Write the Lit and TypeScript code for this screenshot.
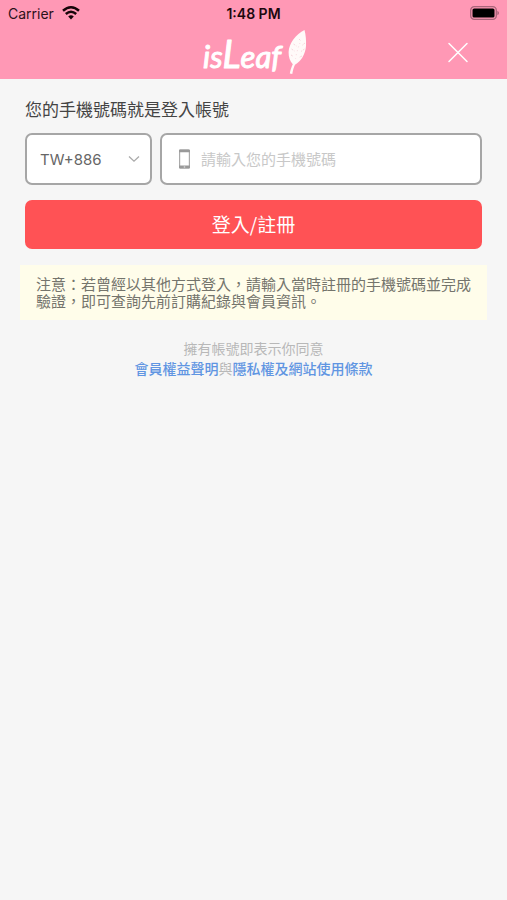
import { LitElement, html, css } from "lit";
import { customElement, state } from "lit/decorators.js";

const cjk = css`"Noto Sans CJK TC", sans-serif`;

@customElement("status-bar")
class StatusBar extends LitElement {
  static styles = css`
    :host {
      display: grid;
      grid-template-columns: 1fr auto 1fr;
      align-items: center;
      height: 26px;
      padding: 0 8px;
      font: 14px Inter, sans-serif;
      color: #2c1119;
    }
    .network {
      display: flex;
      align-items: center;
      gap: 8px;
    }
    .clock {
      font-weight: 600;
      color: #1c080e;
    }
    .battery {
      justify-self: end;
    }
    svg {
      display: block;
    }
  `;

  render() {
    return html`
      <div class="network">
        <span>Carrier</span>
        <svg width="18" height="14" viewBox="0 0 18 14" fill="none" stroke="#170509" aria-label="Wi-Fi">
          <path d="M1 4.8Q9-2.2 17 4.8" stroke-width="2.5" />
          <path d="M3.8 8Q9 3.3 14.2 8" stroke-width="2.4" />
          <path d="M6.2 10.6Q9 8 11.8 10.6L9 13.6Z" fill="#170509" stroke="none" />
        </svg>
      </div>
      <span class="clock">1:48 PM</span>
      <svg class="battery" width="30" height="14" viewBox="0 0 30 14" aria-label="Battery">
        <rect x="1.7" y="0.7" width="25.6" height="12.6" rx="3.6" fill="none" stroke="#a9647a" stroke-width="1.3" />
        <rect x="3.5" y="2.5" width="22" height="9" rx="1.6" fill="#000" />
        <path d="M28.4 4.8Q30 5.6 30 7T28.4 9.2Z" fill="#a9647a" />
      </svg>
    `;
  }
}

@customElement("brand-header")
class BrandHeader extends LitElement {
  static styles = css`
    :host {
      display: grid;
      grid-template-columns: 1fr auto 1fr;
      align-items: center;
      height: 53px;
      padding: 0 38px;
    }
    .logo {
      grid-column: 2;
      display: block;
      font: italic 400 31px Lato, sans-serif;
    }
    .capital {
      font-size: 38px;
    }
    .close {
      justify-self: end;
      display: flex;
      padding: 0;
      border: 0;
      background: none;
      cursor: pointer;
    }
  `;

  render() {
    return html`
      <svg class="logo" width="106" height="53" viewBox="0 0 106 53" role="img" aria-label="isLeaf">
        <text x="2" y="42" fill="#fff" stroke="#fff" stroke-width="1" stroke-linejoin="round">is<tspan class="capital">L</tspan>eaf</text>
        <path
          d="M103.5 4C95 8.500 88 17 87.600 26C87.500 31 89 35.500 91.800 38.200C90.500 41 89.500 43.500 88.800 47.500L91.300 48C91.800 44.500 92.800 41.500 94 38.800C100 35.500 104.500 28 105 20C105.300 14 104.800 9 103.500 4Z"
          fill="#fffaf9"
        />
        <g stroke="#f5ccd4" stroke-width="0.8" fill="none">
          <path d="M92.500 18l3 2M90.500 23l3 2M90 29l2.500 1.500M104 17l-3 2.500M103.500 23l-3.500 2.500M101 30l-3 1.500M98 13l2 2" stroke-dasharray="2 1" />
          <path d="M99 17Q96 24 94.500 33" stroke-dasharray="1 3" />
        </g>
      </svg>
      <button class="close" type="button" aria-label="關閉">
        <svg width="22" height="22" viewBox="0 0 22 22" stroke="#fff" stroke-width="1.5" stroke-linecap="round">
          <path d="M2 1.500L20 19.500M20 1.500L2 19.500" />
        </svg>
      </button>
    `;
  }
}

@customElement("login-form")
class LoginForm extends LitElement {
  static styles = css`
    :host {
      display: block;
      font-family: ${cjk};
    }
    .title {
      display: block;
      margin-bottom: 12px;
      font-size: 17px;
      line-height: 24px;
      color: #444;
    }
    .fields {
      display: grid;
      grid-template-columns: 127px 1fr;
      gap: 8px;
    }
    .field {
      display: flex;
      align-items: center;
      box-sizing: border-box;
      height: 52px;
      border: 2px solid #a6a6a6;
      border-radius: 7px;
      background: #fff;
    }
    .country {
      display: grid;
    }
    .country > * {
      grid-area: 1 / 1;
      align-self: center;
    }
    .code {
      appearance: none;
      width: 100%;
      height: 100%;
      padding: 0 13px;
      border: 0;
      background: none;
      font: 15px Inter, sans-serif;
      color: #666;
    }
    .chevron {
      justify-self: end;
      margin-right: 10px;
      pointer-events: none;
    }
    .phone {
      gap: 10px;
      padding: 0 16px;
    }
    .number {
      flex: 1;
      min-width: 0;
      height: 100%;
      padding: 0 0 2px;
      box-sizing: border-box;
      border: 0;
      outline: 0;
      background: none;
      font: 15px ${cjk};
      color: #444;
    }
    .number::placeholder {
      color: #c8c8c8;
    }
    .submit {
      width: 100%;
      height: 49px;
      margin-top: 15px;
      padding: 0 0 2px;
      border: 0;
      border-radius: 7px;
      background: #ff5255;
      font: 19px ${cjk};
      color: #fff;
      cursor: pointer;
    }
  `;

  @state() private number = "";

  private onInput(event: Event) {
    this.number = (event.target as HTMLInputElement).value;
  }

  render() {
    return html`
      <form @submit=${(event: Event) => event.preventDefault()}>
        <label class="title" for="number">您的手機號碼就是登入帳號</label>
        <div class="fields">
          <div class="field country">
            <select class="code" aria-label="國碼">
              <option>TW+886</option>
            </select>
            <svg class="chevron" width="12" height="8" viewBox="0 0 12 8" fill="none" stroke="#aaa" stroke-width="1.3">
              <path d="M1 1.500L6 6.200L11 1.500" />
            </svg>
          </div>
          <div class="field phone">
            <svg width="13" height="20" viewBox="0 0 13 20">
              <rect x="1.600" y="1" width="9.800" height="18" rx="1" fill="#fff" stroke="#aaa" stroke-width="1.200" />
              <path d="M1 1.500Q1 .5 2 .5H11Q12 .5 12 1.500V3.300H1ZM1 16.600H12V18.500Q12 19.500 11 19.500H2Q1 19.500 1 18.500Z" fill="#999" />
              <path d="M5.800 18H7.200" stroke="#eee" stroke-width="1" />
            </svg>
            <input
              class="number"
              id="number"
              type="tel"
              placeholder="請輸入您的手機號碼"
              .value=${this.number}
              @input=${this.onInput}
            />
          </div>
        </div>
        <button class="submit" type="submit">登入/註冊</button>
      </form>
    `;
  }
}

@customElement("app-root")
class AppRoot extends LitElement {
  static styles = css`
    :host {
      display: block;
      min-height: 100vh;
      background: #f6f6f6;
      font-family: ${cjk};
    }
    .top {
      background: #ff98b5;
    }
    .content {
      padding: 18px 25px;
    }
    .notice {
      margin: 16px -5px 0;
      padding: 10px 16px 11px;
      background: #fffdea;
      font-size: 15px;
      line-height: 17px;
      color: #74746c;
    }
    .terms {
      margin: 18px 0 0;
      text-align: center;
      font-size: 14px;
      line-height: 20px;
      color: #b8b8b8;
    }
    .terms a {
      font-weight: 500;
      color: #6095e2;
      text-decoration: none;
    }
  `;

  render() {
    return html`
      <header class="top">
        <status-bar></status-bar>
        <brand-header></brand-header>
      </header>
      <main class="content">
        <login-form></login-form>
        <p class="notice">注意：若曾經以其他方式登入，請輸入當時註冊的手機號碼並完成驗證，即可查詢先前訂購紀錄與會員資訊。</p>
        <p class="terms">
          擁有帳號即表示你同意<br /><a href="#rights">會員權益聲明</a>與<a href="#privacy">隱私權及網站使用條款</a>
        </p>
      </main>
    `;
  }
}
